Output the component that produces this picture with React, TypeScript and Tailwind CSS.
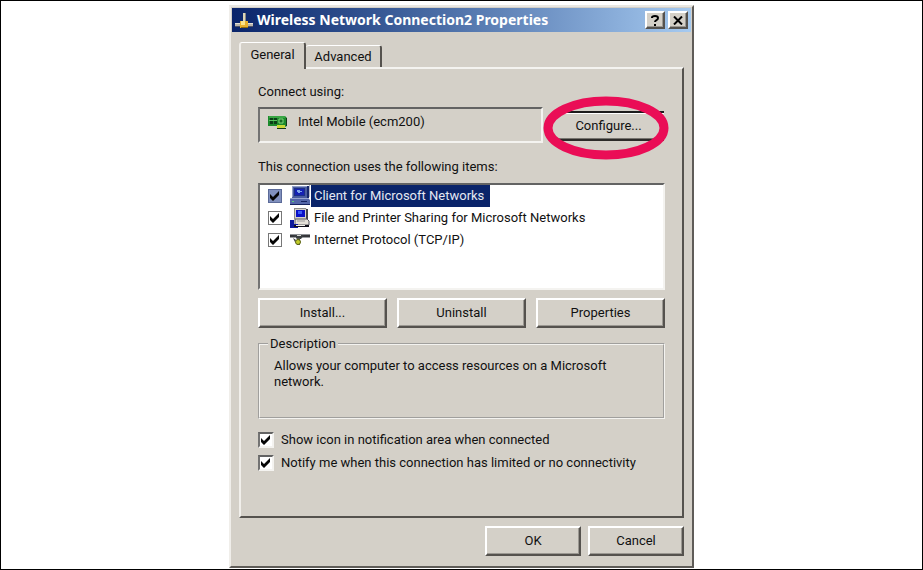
import React, { useState } from 'react'
import clsx from 'clsx'

const RAISED =
  'border-2 border-t-white border-l-white border-r-[#55524e] border-b-[#55524e] shadow-[inset_-1px_-1px_0_#9b9892]'
const SUNKEN =
  'border-2 border-t-[#636363] border-l-[#737373] border-r-[#f4f3f0] border-b-[#f4f3f0]'

interface IconProps {
  className?: string
}

const NetworkIcon: React.FC<IconProps> = ({ className }) => (
  <svg viewBox="0 0 20 18" className={className} aria-hidden="true">
    <path d="M9 2h3v9H9z" fill="#dcd6b8" />
    <path d="M11 2h1v9h-1z" fill="#8d8a80" />
    <path d="M1 12h18v3H1z" fill="#b9b6ac" />
    <path d="M1 12h18v1H1z" fill="#e4e1d6" />
    <path d="M1 15h18v1H1z" fill="#4f5468" />
    <path d="M6 10h8v7H6z" fill="#e9b02c" />
    <path d="M7 10h4v4H7z" fill="#fbe38a" />
    <path d="M7 16h7v1H7z" fill="#8f6a12" />
  </svg>
)

const AdapterIcon: React.FC<IconProps> = ({ className }) => (
  <svg viewBox="0 0 21 16" className={className} aria-hidden="true">
    <path d="M1 2h17l2 2v8l-2 1v1h-8v-2H1z" fill="#1c8a2c" />
    <path d="M3 4h3v2H3zM7 4h3v2H7zM3 7h3v3H3zM7 7h3v3H7z" fill="#0b3d18" />
    <path d="M2 3h16M2 6.5h8" stroke="#59c25f" strokeWidth="1" />
    <path d="M12 5h4v4h-4z" fill="#146a22" stroke="#7fd67a" strokeWidth="1" />
    <path d="M10 11h8v3h-8z" fill="#c8d836" />
    <path d="M10 14h9v1h-9zM19 4h1v8h-1z" fill="#123a16" />
  </svg>
)

const ClientIcon: React.FC<IconProps> = ({ className }) => (
  <svg viewBox="0 0 22 22" className={className} aria-hidden="true">
    <path d="M3 1h15l2 1v11H3z" fill="#4a5da0" />
    <path d="M3 1h15v1H4v10H3z" fill="#8f9dc8" />
    <path d="M5 3h11v8H5z" fill="#1c2f86" />
    <path d="M6 4h9v6H6z" fill="#1522b4" />
    <path d="M8 5h3v1h2v1h-2v1H9V7H8z" fill="#7fa6ec" />
    <path d="M18 1h2v12h-2z" fill="#17286c" />
    <path d="M1 13h18l2 2v5H1z" fill="#5366a8" />
    <path d="M1 13h18v1H1z" fill="#98a6d0" />
    <path d="M1 19h20v1H1zM12 16h6v1h-6z" fill="#14225e" />
    <path d="M3 16h2v1H3z" fill="#5fd07a" />
    <path d="M20 0h1v12h-1z" fill="#b8bccb" />
  </svg>
)

const SharingIcon: React.FC<IconProps> = ({ className }) => (
  <svg viewBox="0 0 22 22" className={className} aria-hidden="true">
    <path d="M5 1h12l2 2v9H5z" fill="#d6d3ca" />
    <path d="M5 1h12v1H6v10H5z" fill="#8b8b8b" />
    <path d="M7 3h9v7H7z" fill="#0a12c8" />
    <path d="M9 4h4v3H9z" fill="#3c5cf4" />
    <path d="M17 2h2v10h-2z" fill="#44444c" />
    <path d="M6 12h12l2 2v4H6z" fill="#e4e1d8" stroke="#55555c" />
    <path d="M8 14h8" stroke="#9b9b9b" />
    <path d="M1 13h4v4h4v4H1z" fill="#0c1a9c" />
    <path d="M5 18h15v2H5z" fill="#101018" />
    <path d="M7 18h9v1H7z" fill="#f4f2ea" />
  </svg>
)

const ProtocolIcon: React.FC<IconProps> = ({ className }) => (
  <svg viewBox="0 0 22 22" className={className} aria-hidden="true">
    <path d="M1 6h6v2H1zM13 6h8v2h-8z" fill="#34363a" />
    <path d="M1 5h20v1H1z" fill="#8f9296" />
    <path d="M1 8h5v1H1zM13 8h8v1h-8z" fill="#9a9da0" />
    <path d="M4 6h11l-3 4H8z" fill="#3b3f42" />
    <path d="M8 6h4v1H8z" fill="#dadcd8" />
    <path d="M8 9h3v7H8z" fill="#51564c" />
    <path d="M4 9l3 2-1 2z" fill="#34363a" />
    <circle cx="9" cy="13" r="2.5" fill="#c2cc2a" stroke="#5a6114" />
  </svg>
)

interface CheckboxProps {
  id: string
  checked: boolean
  onChange: () => void
  className?: string
}

const Checkbox: React.FC<CheckboxProps> = ({
  id,
  checked,
  onChange,
  className,
}) => (
  <span className="grid shrink-0 place-items-center">
    <input
      id={id}
      type="checkbox"
      checked={checked}
      onChange={onChange}
      className={clsx('col-start-1 row-start-1 appearance-none', className)}
    />
    {checked && (
      <svg
        viewBox="0 0 10 10"
        className="pointer-events-none col-start-1 row-start-1 size-2.5"
        aria-hidden="true"
      >
        <path d="M0 3l3 3 6-6v4L3 10 0 7z" fill="#050505" />
      </svg>
    )}
  </span>
)

interface DialogButtonProps {
  className?: string
  children: React.ReactNode
}

const DialogButton: React.FC<DialogButtonProps> = ({ className, children }) => (
  <button
    type="button"
    className={clsx('h-[30px] bg-[#d4d0c8] text-center', className ?? '', RAISED)}
  >
    {children}
  </button>
)

const items = [
  { id: 'client', label: 'Client for Microsoft Networks', Icon: ClientIcon },
  {
    id: 'sharing',
    label: 'File and Printer Sharing for Microsoft Networks',
    Icon: SharingIcon,
  },
  { id: 'tcpip', label: 'Internet Protocol (TCP/IP)', Icon: ProtocolIcon },
]

const options = [
  { id: 'show-icon', label: 'Show icon in notification area when connected' },
  {
    id: 'notify',
    label: 'Notify me when this connection has limited or no connectivity',
  },
]

export default function App() {
  const [unchecked, setUnchecked] = useState<string[]>([])
  const selected = 'client'

  const toggle = (id: string) =>
    setUnchecked((prev) =>
      prev.includes(id) ? prev.filter((x) => x !== id) : [...prev, id]
    )

  return (
    <main className="flex min-h-screen items-start justify-center border border-black bg-white pt-1 font-[Roboto,Arial,sans-serif] text-[13px] leading-4 text-[#111]">
      <section
        aria-labelledby="dialog-title"
        className="w-full max-w-[465px] border-2 border-t-[#e9e7e2] border-r-[#5f5c58] border-b-[#5f5c58] border-l-[#f0eeea] bg-[#d4d0c8] p-px"
      >
        <header className="flex h-6 items-center bg-linear-to-r from-[#0a246a] to-[#a6caf0] pr-[3px] pl-0.5">
          <NetworkIcon className="h-[18px] w-5" />
          <h1
            id="dialog-title"
            className="ml-[3px] flex-1 font-['Noto_Sans',Tahoma,sans-serif] text-[14px] font-bold text-white"
          >
            Wireless Network Connection2 Properties
          </h1>
          <div className="flex gap-[3px]">
            <button
              type="button"
              aria-label="Help"
              className={clsx('grid h-[18px] w-5 place-items-center bg-[#d4d0c8]', RAISED)}
            >
              <svg viewBox="0 0 8 11" className="h-[11px] w-2" aria-hidden="true">
                <path
                  d="M1 3V2.500Q1 1 4 1t3 2q0 1.500-1.500 2.200T4 7"
                  fill="none"
                  stroke="#000"
                  strokeWidth="2"
                />
                <path d="M3 9h2v2H3z" />
              </svg>
            </button>
            <button
              type="button"
              aria-label="Close"
              className={clsx('grid h-[18px] w-5 place-items-center bg-[#d4d0c8]', RAISED)}
            >
              <svg viewBox="0 0 10 9" className="h-[9px] w-2.5" aria-hidden="true">
                <path d="M1 .5l8 8M9 .5l-8 8" stroke="#000" strokeWidth="2" />
              </svg>
            </button>
          </div>
        </header>

        <div className="px-[7px] pt-2.5 pb-[9px]">
          <div role="tablist" className="flex items-end">
            <button
              type="button"
              role="tab"
              aria-selected="true"
              className="z-10 -mb-0.5 h-[27px] w-[67px] rounded-t-[3px] border-t border-r-2 border-l-2 border-t-white border-r-[#55524e] border-l-[#f1efeb] bg-[#d4d0c8] pb-0.5"
            >
              General
            </button>
            <button
              type="button"
              role="tab"
              aria-selected="false"
              className="h-[22px] w-[76px] rounded-t-[3px] border-t border-r-2 border-t-white border-r-[#55524e]"
            >
              Advanced
            </button>
          </div>

          <div
            role="tabpanel"
            className="border-2 border-t-[#f4f3f0] border-r-[#55524e] border-b-[#55524e] border-l-[#f1efeb] px-[17px] pt-[15px] pb-[45px]"
          >
            <p>Connect using:</p>
            <div className="mt-[7px] flex items-center gap-2.5">
              <div className={clsx('flex h-9 flex-1 items-center pb-1.5 pl-[7px]', SUNKEN)}>
                <AdapterIcon className="h-4 w-[21px]" />
                <span className="ml-2.5">Intel Mobile (ecm200)</span>
              </div>
              <div className="relative pt-0.5 pr-px">
                <button
                  type="button"
                  className="h-[30px] w-[111px] border-t-2 border-b-2 border-t-[#1c1c1c] border-b-[#2c2a28] bg-[#d4d0c8] text-center shadow-[inset_0_1px_0_#fff,inset_0_-1px_0_#77746f]"
                >
                  Configure...
                </button>
                <svg
                  viewBox="0 0 126 64"
                  className="pointer-events-none absolute -top-[13px] -left-2.5 h-16 w-[126px] max-w-none"
                  aria-hidden="true"
                >
                  <ellipse
                    cx="63"
                    cy="32"
                    rx="58"
                    ry="27"
                    fill="none"
                    stroke="#ea0d56"
                    strokeWidth="9"
                  />
                </svg>
              </div>
            </div>

            <p className="mt-4">This connection uses the following items:</p>
            <ul className={clsx('mt-2 min-h-[107px] bg-white', SUNKEN)}>
              {items.map(({ id, label, Icon }) => (
                <li key={id} className="flex h-[22px] items-center pl-2">
                  <Checkbox
                    id={id}
                    checked={!unchecked.includes(id)}
                    onChange={() => toggle(id)}
                    className={clsx(
                      'size-3.5 border',
                      id === selected
                        ? 'border-[#5b6a98] bg-[#8090bd]'
                        : 'border-[#777] bg-white'
                    )}
                  />
                  <Icon className="ml-[7px] size-[22px]" />
                  <label
                    htmlFor={id}
                    className={clsx(
                      'flex h-full items-center pr-1.5 pl-[3px]',
                      id === selected && 'bg-[#0a246a] text-[#e4e8f2]'
                    )}
                  >
                    {label}
                  </label>
                </li>
              ))}
            </ul>

            <div className="mt-2 grid grid-cols-3 gap-2.5">
              <DialogButton>Install...</DialogButton>
              <DialogButton>Uninstall</DialogButton>
              <DialogButton>Properties</DialogButton>
            </div>

            <fieldset className="mt-2 min-h-[83px] border-2 border-[#f4f3f0] px-3.5 pt-1.5 [border-style:groove]">
              <legend className="-ml-1.5 px-0.5">Description</legend>
              <p>
                Allows your computer to access resources on a Microsoft network.
              </p>
            </fieldset>

            <div className="mt-[13px] flex flex-col gap-[7px]">
              {options.map(({ id, label }) => (
                <div key={id} className="flex h-4 items-center gap-[7px]">
                  <Checkbox
                    id={id}
                    checked={!unchecked.includes(id)}
                    onChange={() => toggle(id)}
                    className={clsx('size-4 bg-white', SUNKEN)}
                  />
                  <label htmlFor={id}>{label}</label>
                </div>
              ))}
            </div>
          </div>

          <footer className="mt-2 flex justify-end gap-[7px]">
            <DialogButton className="w-24">OK</DialogButton>
            <DialogButton className="w-24">Cancel</DialogButton>
          </footer>
        </div>
      </section>
    </main>
  )
}
